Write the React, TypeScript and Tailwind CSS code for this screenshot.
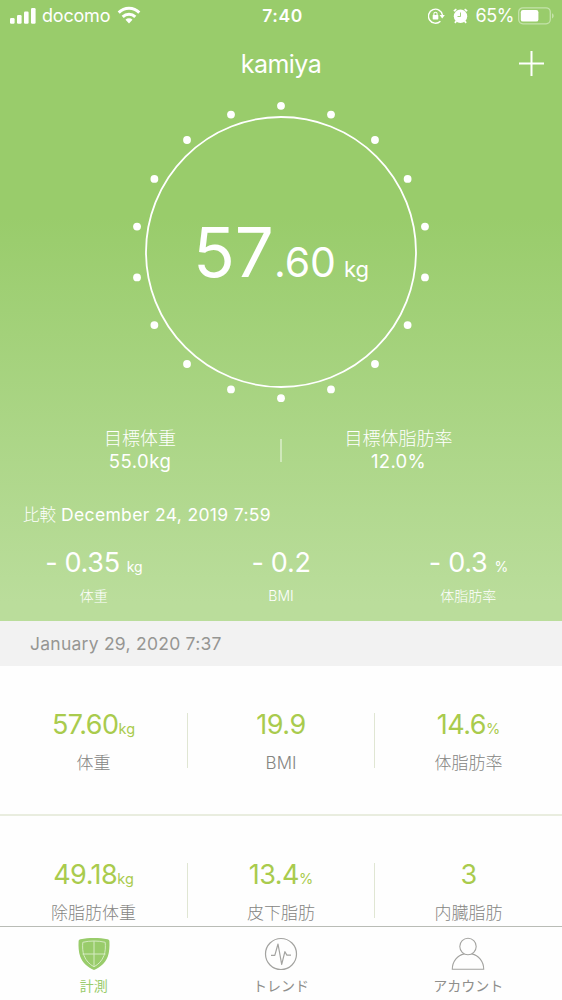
import { useState } from 'react';
import type { ReactNode } from 'react';

interface Metric {
  label: string;
  value: string;
  unit?: string;
}

const changes: Metric[] = [
  { label: '体重', value: '- 0.35', unit: 'kg' },
  { label: 'BMI', value: '- 0.2' },
  { label: '体脂肪率', value: '- 0.3', unit: '%' },
];

const metricRows: Metric[][] = [
  [
    { label: '体重', value: '57.60', unit: 'kg' },
    { label: 'BMI', value: '19.9' },
    { label: '体脂肪率', value: '14.6', unit: '%' },
  ],
  [
    { label: '除脂肪体重', value: '49.18', unit: 'kg' },
    { label: '皮下脂肪', value: '13.4', unit: '%' },
    { label: '内臓脂肪', value: '3' },
  ],
];

const DOT_COUNT = 18;

function SignalIcon() {
  return (
    <svg width="26" height="17" viewBox="0 0 26 17" fill="currentColor">
      <rect x="0" y="10" width="4.6" height="5.8" rx="1.2" />
      <rect x="7" y="7" width="4.6" height="8.8" rx="1.2" />
      <rect x="14" y="3.5" width="4.6" height="12.3" rx="1.2" />
      <rect x="21" y="0" width="4.6" height="15.8" rx="1.2" />
    </svg>
  );
}

function WifiIcon() {
  return (
    <svg width="24" height="18" viewBox="0 0 24 18" fill="none" stroke="currentColor" strokeWidth="3">
      <path d="M1.7 6.6a14.6 14.6 0 0 1 20.6 0" />
      <path d="M5.7 10.9a9 9 0 0 1 12.6 0" />
      <path d="M12 17.4l-3.5-3.6a5 5 0 0 1 7 0z" fill="currentColor" stroke="none" />
    </svg>
  );
}

function RotationLockIcon() {
  return (
    <svg width="17" height="16" viewBox="0 0 17 16" fill="none" stroke="currentColor">
      <path d="M12.4 13.2A7 7 0 1 1 14.4 7" strokeWidth="1.4" />
      <path d="M11.6 7h5.2l-2.6 3.4z" fill="currentColor" stroke="none" />
      <rect x="4.7" y="7" width="5.6" height="4.4" rx="0.6" fill="currentColor" stroke="none" />
      <path d="M5.9 7.2V5.8a1.6 1.6 0 0 1 3.2 0v1.4" strokeWidth="1.1" />
    </svg>
  );
}

function AlarmIcon() {
  return (
    <svg width="15" height="16" viewBox="0 0 15 16" fill="none" stroke="currentColor">
      <circle cx="7.5" cy="8.2" r="6.7" fill="currentColor" stroke="none" />
      <path d="M1 3.2a7 7 0 0 1 2.4-2M14 3.2a7 7 0 0 0-2.4-2" strokeWidth="1.8" />
      <path d="M3.4 13l-1.5 1.9M11.6 13l1.5 1.9" strokeWidth="1.8" />
      <path d="M7.5 4.5v4H4.5" stroke="#99cc6b" strokeWidth="0.9" />
    </svg>
  );
}

function BatteryIcon() {
  return (
    <svg width="37" height="18" viewBox="0 0 37 18">
      <rect x="0.7" y="0.8" width="31.6" height="16" rx="4.2" fill="none" stroke="#c4e2aa" strokeWidth="1.3" />
      <rect x="2.8" y="3" width="17.6" height="11.6" rx="2.2" fill="#fff" />
      <path d="M34 6.2c2.2 1 2.2 4.2 0 5.2z" fill="#c4e2aa" />
    </svg>
  );
}

function DialRing() {
  const dots = Array.from({ length: DOT_COUNT }, (_, i) => {
    const angle = (i * 2 * Math.PI) / DOT_COUNT;
    return { x: 152 + 146.2 * Math.sin(angle), y: 152 - 146.2 * Math.cos(angle) };
  });

  return (
    <svg className="col-start-1 row-start-1" width="304" height="304" viewBox="0 0 304 304">
      <circle cx="152" cy="152" r="135" fill="none" stroke="#fff" strokeWidth="1.8" />
      {dots.map((dot, i) => (
        <circle key={i} cx={dot.x} cy={dot.y} r="3.9" fill="#fff" />
      ))}
    </svg>
  );
}

function ShieldIcon() {
  return (
    <svg width="34" height="34" viewBox="0 0 34 34" fill="none">
      <path
        d="M17 1c5 0 9.500.3 13.5 1.2 1.3.3 1.8 1 1.900 2.1.3 5.200 0 10.700-1.600 15.200C28.500 26 23 30.500 17 33 11 30.500 5.500 26 3.200 19.500 1.600 15 1.300 9.500 1.600 4.300c.1-1.100.6-1.800 1.900-2.100C7.500 1.300 12 1 17 1z"
        fill="#99cc6b"
      />
      <path
        d="M17 4c4 0 7.800.4 11.200 1.300.4 4.700.2 9.300-1.200 13.200-2 5.300-5.500 8.800-10 11.300-4.500-2.500-8-6-10-11.300C5.600 14.600 5.400 10 5.800 5.300 9.200 4.400 13 4 17 4zM17 4v25.800M5.500 17h23"
        stroke="#d5ebc1"
        strokeWidth="1"
      />
    </svg>
  );
}

function PulseIcon() {
  return (
    <svg width="34" height="34" viewBox="0 0 34 34" fill="none" stroke="#a3a3a0" strokeWidth="1.2">
      <circle cx="17" cy="17" r="15.5" />
      <path d="M7 18.400h3.800l3.200-11.400 3.700 20.300 3.200-12.600 2 3.400H27" strokeLinejoin="round" />
    </svg>
  );
}

function PersonIcon() {
  return (
    <svg width="34" height="34" viewBox="0 0 34 34" fill="none" stroke="#a3a3a0" strokeWidth="1.1">
      <circle cx="17" cy="9.5" r="8.2" />
      <path d="M13.200 16.900C6.500 18.300 1.300 24.500 1.300 32.300h31.400c0-7.800-5.200-14-11.900-15.400" />
    </svg>
  );
}

const tabs: { id: string; label: string; icon: ReactNode }[] = [
  { id: 'measure', label: '計測', icon: <ShieldIcon /> },
  { id: 'trend', label: 'トレンド', icon: <PulseIcon /> },
  { id: 'account', label: 'アカウント', icon: <PersonIcon /> },
];

export default function App() {
  const [activeTab, setActiveTab] = useState('measure');

  return (
    <div className="flex h-[1000px] w-[562px] flex-col overflow-hidden bg-[#fefefe] font-['Inter','Noto_Sans_CJK_JP',sans-serif]">
      <div className="flex h-[621px] shrink-0 flex-col bg-linear-to-b from-[#99cc6b] from-35% to-[#badd9b] to-97% text-white">
        {/* Status bar */}
        <div className="grid h-8 shrink-0 grid-cols-3 items-center pr-[7px] pl-2.5">
          <div className="flex items-center">
            <SignalIcon />
            <span className="ml-1.5 text-[18px] leading-8 font-[370] tracking-[-0.2px]">docomo</span>
            <span className="ml-[7px] -mt-0.5"><WifiIcon /></span>
          </div>
          <span className="text-center text-[17.5px] font-semibold tracking-[0.6px]">7:40</span>
          <div className="flex items-center justify-end">
            <RotationLockIcon />
            <span className="ml-2"><AlarmIcon /></span>
            <span className="ml-[7px] text-[18px] leading-8 font-[370] tracking-[-0.4px]">65%</span>
            <span className="ml-1"><BatteryIcon /></span>
          </div>
        </div>

        {/* Header */}
        <div className="grid h-[62px] shrink-0 grid-cols-[60px_1fr_60px] items-center">
          <h1 className="col-start-2 pt-1 text-center text-[25px] font-[370] tracking-[-0.5px]">kamiya</h1>
          <button aria-label="add" className="flex justify-end pr-[18px]">
            <svg width="25" height="25" viewBox="0 0 25 25" stroke="#fff" strokeWidth="2">
              <path d="M12.5 0v25M0 12.5h25" />
            </svg>
          </button>
        </div>

        {/* Current weight */}
        <div className="mx-auto mt-1.5 grid shrink-0">
          <DialRing />
          <div className="col-start-1 row-start-1 flex h-[304px] items-baseline justify-center pt-[112px] leading-[80px]">
            <span className="text-[69px] font-[390]">57</span>
            <span className="text-[41px] font-[370]">.60</span>
            <span className="ml-2 text-[22px] font-[370]">kg</span>
          </div>
        </div>

        {/* Goals */}
        <div className="mt-[23px] grid h-[46px] shrink-0 grid-cols-[280px_2px_233px] items-center text-center text-[18px] leading-[23px]">
          <div>
            <p className="font-light">目標体重</p>
            <p className="text-[18.5px] font-[370] tracking-[0.5px]">55.0kg</p>
          </div>
          <div className="h-[23px] bg-[#cfe8ba]" />
          <div>
            <p className="font-light">目標体脂肪率</p>
            <p className="text-[18.5px] font-[370] tracking-[0.3px]">12.0%</p>
          </div>
        </div>

        {/* Comparison with the previous measurement */}
        <p className="mt-[30px] flex h-6 shrink-0 gap-[5px] pl-[23px] text-[17.5px] leading-6">
          <span className="text-[16.5px] font-light">比較</span>
          <span className="font-[370] tracking-[0.35px]">December 24, 2019 7:59</span>
        </p>
        <div className="mt-[18px] grid grid-cols-3 text-center">
          {changes.map((item) => (
            <div key={item.label}>
              <p className="h-9 text-[27px] leading-[36px] font-[370] tracking-[-0.3px]">
                {item.value}
                {item.unit && <span className="ml-[7px] text-[14px] leading-none">{item.unit}</span>}
              </p>
              <p className="mt-[5px] h-5 text-[14px] leading-5 font-light">{item.label}</p>
            </div>
          ))}
        </div>
      </div>

      <div className="h-[45px] shrink-0 bg-[#f2f2f2] pl-[30px] text-[17.5px] leading-[45px] font-[370] tracking-[0.25px] text-[#969693]">
        January 29, 2020 7:37
      </div>

      <div className="h-[260px] shrink-0 overflow-hidden">
        {metricRows.map((row, i) => (
          <div
            key={i}
            className="grid h-[150px] grid-cols-[187px_187px_188px] border-b-2 border-[#e9eddf] pt-[47px] pb-[46px] text-center"
          >
            {row.map((item) => (
              <div key={item.label} className="h-[55px] border-l border-[#e0e6d3] first:border-l-0">
                <p className="mt-[-6px] h-9 text-[27px] leading-[36px] tracking-[-0.5px] text-[#a9cb4d]">
                  {item.value}
                  {item.unit && <span className="text-[14.5px] leading-none tracking-normal">{item.unit}</span>}
                </p>
                <p className="mt-2 h-6 text-[17px] leading-6 font-light text-[#858582]">{item.label}</p>
              </div>
            ))}
          </div>
        ))}
      </div>

      <nav className="grid h-[74px] shrink-0 grid-cols-3 border-t border-[#b9bcb6]">
        {tabs.map((tab) => (
          <button
            key={tab.id}
            onClick={() => setActiveTab(tab.id)}
            className={`flex flex-col items-center pt-2.5 text-[14px] ${
              activeTab === tab.id ? 'text-[#99cc6b]' : 'text-[#8f8f8c]'
            }`}
          >
            {tab.icon}
            <span className="mt-[5px] leading-5">{tab.label}</span>
          </button>
        ))}
      </nav>
    </div>
  );
}
